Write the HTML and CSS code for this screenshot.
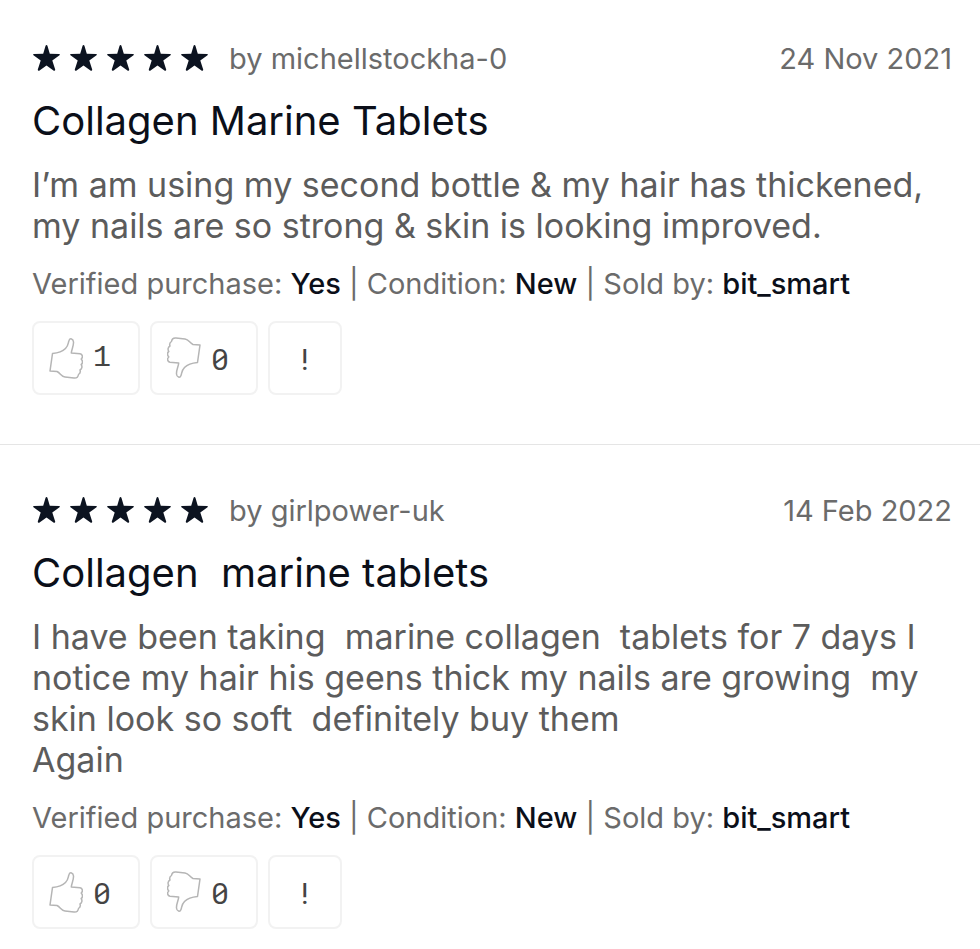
FILE: index.html
```html
<!DOCTYPE html>
<html lang="en">
<head>
<meta charset="utf-8">
<meta name="viewport" content="width=device-width, initial-scale=1">
<title>Product reviews</title>
<link rel="stylesheet" href="styles.css">
</head>
<body>
<svg class="sprite" aria-hidden="true">
  <symbol id="star" viewBox="0 0 28 28">
    <path d="M14.500 1Q15.200 1 15.500 2L17.800 9.800 27 10Q28.600 10.300 27.500 11.300L20.300 16.500 23.200 25.500Q23.300 27.200 21.800 26.700L14.500 21.500 7.200 26.700Q5.700 27.200 5.800 25.500L8.700 16.500 1.500 11.300Q.4 10.300 2 10L11.200 9.800 13.500 2Q13.800 1 14.500 1Z"/>
  </symbol>
  <symbol id="thumb" viewBox="0 0 34 42">
    <path d="M3.500 16.500C9 16 13 15 16.500 11.500C19.500 8.500 19 6 20 3.500C21 .8 24.200 1.500 24.500 5C24.800 9 22.500 12.500 22.300 16L31 16.800C33.800 17.300 34 20.500 32.200 22C34 24 33.800 26.500 32.200 27.500C33.500 29.500 33 32 31 33C31.800 35 31 36.500 29.500 37.500C29 40.500 27.500 41.300 25 41L16 40C12 39.500 11.500 36 8 34.500L1 34Z"/>
  </symbol>
</svg>
<main class="reviews">
  <article class="review">
    <header class="review-header">
      <div class="stars" role="img" aria-label="5 out of 5 stars">
        <svg><use href="#star"/></svg><svg><use href="#star"/></svg><svg><use href="#star"/></svg><svg><use href="#star"/></svg><svg><use href="#star"/></svg>
      </div>
      <span class="author">by michellstockha-0</span>
      <time class="date" datetime="2021-11-24">24 Nov 2021</time>
    </header>
    <h2 class="title">Collagen Marine Tablets</h2>
    <p class="body">I’m am using my second bottle &amp; my hair has thickened,
my nails are so strong &amp; skin is looking improved.</p>
    <p class="meta">Verified purchase: <b>Yes</b> | Condition: <b>New</b> | Sold by: <b>bit_smart</b></p>
    <div class="actions">
      <button class="action" type="button" aria-label="Helpful, 1"><svg class="thumb"><use href="#thumb"/></svg><span class="count-voted">1</span></button>
      <button class="action" type="button" aria-label="Not helpful, 0"><svg class="thumb thumb-down"><use href="#thumb"/></svg><span>0</span></button>
      <button class="action report" type="button" aria-label="Report review">!</button>
    </div>
  </article>
  <article class="review">
    <header class="review-header">
      <div class="stars" role="img" aria-label="5 out of 5 stars">
        <svg><use href="#star"/></svg><svg><use href="#star"/></svg><svg><use href="#star"/></svg><svg><use href="#star"/></svg><svg><use href="#star"/></svg>
      </div>
      <span class="author">by girlpower-uk</span>
      <time class="date" datetime="2022-02-14">14 Feb 2022</time>
    </header>
    <h2 class="title">Collagen  marine tablets</h2>
    <p class="body">I have been taking  marine collagen  tablets for 7 days I
notice my hair his geens thick my nails are growing  my
skin look so soft  definitely buy them
Again</p>
    <p class="meta">Verified purchase: <b>Yes</b> | Condition: <b>New</b> | Sold by: <b>bit_smart</b></p>
    <div class="actions">
      <button class="action" type="button" aria-label="Helpful, 0"><svg class="thumb"><use href="#thumb"/></svg><span>0</span></button>
      <button class="action" type="button" aria-label="Not helpful, 0"><svg class="thumb thumb-down"><use href="#thumb"/></svg><span>0</span></button>
      <button class="action report" type="button" aria-label="Report review">!</button>
    </div>
  </article>
</main>
</body>
</html>
```
FILE: styles.css
```css
* {
  box-sizing: border-box;
}

body {
  margin: 0;
  background: #fff;
  color: #5c5c5c;
  font-family: Inter, "Liberation Sans", sans-serif;
}

.sprite {
  position: absolute;
  width: 0;
  height: 0;
}

.review {
  padding: 39px 28px 49px 32px;
}

.review + .review {
  border-top: 1px solid #e5e5e5;
  padding-top: 46px;
  padding-bottom: 20px;
}

.review-header {
  display: flex;
  align-items: center;
  color: #6b6b6b;
  font-size: 29px;
  line-height: 40px;
}

.stars {
  display: flex;
  gap: 9px;
  margin: 0 21px 2px 0;
}

.stars svg {
  width: 28px;
  height: 28px;
  fill: #0c1320;
}

.date {
  margin-left: auto;
}

.title {
  margin: 18px 0 19px;
  color: #0b0f19;
  font-size: 40px;
  font-weight: 400;
  line-height: 48px;
  white-space: pre-wrap;
}

.body {
  margin: 0 0 18px;
  font-size: 34px;
  line-height: 41px;
  white-space: pre-wrap;
}

.meta {
  margin: 0 0 17px;
  color: #6b6b6b;
  font-size: 29px;
  line-height: 40px;
}

.meta b {
  color: #0b0f19;
  font-weight: 500;
}

.actions {
  display: flex;
  gap: 10px;
}

.action {
  display: flex;
  align-items: center;
  gap: 10px;
  width: 108px;
  height: 74px;
  padding: 0 0 0 15px;
  border: 2px solid #f2f2f2;
  border-radius: 8px;
  background: #fff;
  color: #444;
  font-family: "Roboto Mono", "Liberation Mono", monospace;
  font-size: 30px;
}

.count-voted {
  font-family: "Liberation Mono", monospace;
}

.report {
  justify-content: center;
  width: 74px;
  padding: 0;
}

.thumb {
  width: 34px;
  height: 42px;
  fill: none;
  stroke: #b5b5b5;
  stroke-width: 1.5;
  stroke-linejoin: round;
}

.thumb-down {
  transform: rotate(180deg);
}
```
